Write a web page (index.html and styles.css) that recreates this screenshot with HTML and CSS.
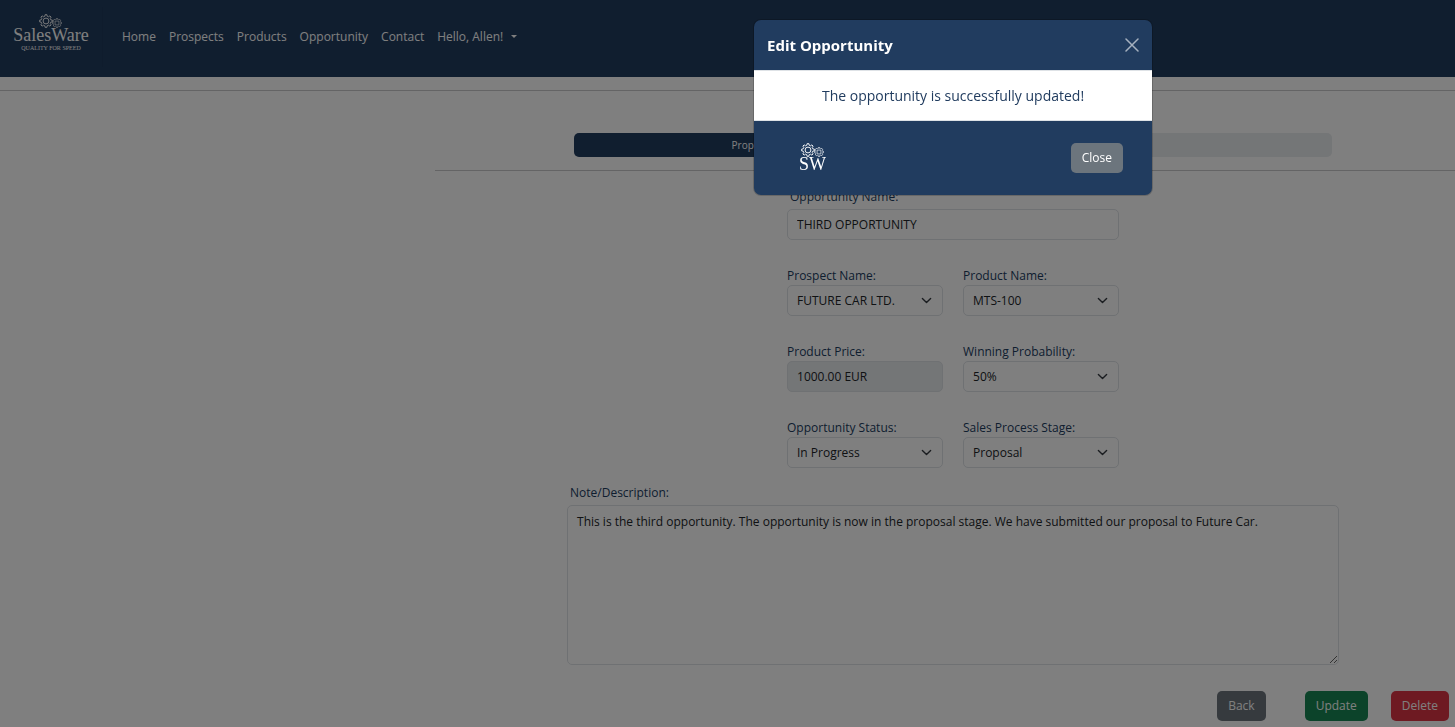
FILE: index.html
```html
<!DOCTYPE html>
<html lang="en">
<head>
  <meta charset="utf-8">
  <meta name="viewport" content="width=device-width, initial-scale=1">
  <title>SalesWare - Edit Opportunity</title>
  <link rel="stylesheet" href="styles.css">
</head>
<body>
  <svg class="defs" aria-hidden="true">
    <symbol id="gear" viewBox="-12 -12 24 24">
      <path d="M8.3-1.9 10.9-1.5V1.5L8.3 1.9 7.2 4.5 8.8 6.6 6.6 8.8 4.5 7.2 1.9 8.3 1.5 10.9H-1.5L-1.9 8.3-4.5 7.2-6.6 8.8-8.8 6.6-7.2 4.5-8.3 1.9-10.9 1.5V-1.5L-8.3-1.9-7.2-4.5-8.8-6.6-6.6-8.8-4.5-7.2-1.9-8.3-1.5-10.9H1.5L1.9-8.3 4.5-7.2 6.6-8.8 8.8-6.6 7.2-4.5Z"/>
      <circle r="5"/>
    </symbol>
  </svg>

  <header class="navbar">
    <a class="brand" href="#">
      <svg class="gears" viewBox="0 0 24 14" aria-hidden="true">
        <use href="#gear" x="0" y="0" width="14" height="14"/>
        <use href="#gear" x="13" y="4" width="10" height="10"/>
      </svg>
      <span class="brand-name">SalesWare</span>
      <span class="brand-tag">QUALITY FOR SPEED</span>
    </a>
    <nav class="nav-links">
      <a href="#">Home</a>
      <a href="#">Prospects</a>
      <a href="#">Products</a>
      <a href="#">Opportunity</a>
      <a href="#">Contact</a>
      <a class="dropdown" href="#">Hello, Allen!</a>
    </nav>
  </header>
  <hr class="rule top-rule">

  <main class="content">
    <div class="progress">
      <div class="progress-bar" role="progressbar" aria-label="Sales stage" aria-valuenow="47" aria-valuemin="0" aria-valuemax="100" style="width: 47%">Proposal</div>
    </div>
    <hr class="rule section-rule">

    <form class="form">
      <div class="fields">
        <div class="field spaced full">
          <label for="name">Opportunity Name:</label>
          <input class="control" id="name" type="text" value="THIRD OPPORTUNITY">
        </div>
        <div class="field">
          <label for="prospect">Prospect Name:</label>
          <select class="control" id="prospect"><option>FUTURE CAR LTD.</option></select>
        </div>
        <div class="field">
          <label for="product">Product Name:</label>
          <select class="control" id="product"><option>MTS-100</option></select>
        </div>
        <div class="field">
          <label for="price">Product Price:</label>
          <input class="control" id="price" type="text" value="1000.00 EUR" readonly>
        </div>
        <div class="field">
          <label for="probability">Winning Probability:</label>
          <select class="control" id="probability"><option>50%</option></select>
        </div>
        <div class="field">
          <label for="status">Opportunity Status:</label>
          <select class="control" id="status"><option>In Progress</option></select>
        </div>
        <div class="field">
          <label for="stage">Sales Process Stage:</label>
          <select class="control" id="stage"><option>Proposal</option></select>
        </div>
      </div>
      <div class="field spaced note">
        <label for="note">Note/Description:</label>
        <textarea class="control" id="note">This is the third opportunity. The opportunity is now in the proposal stage. We have submitted our proposal to Future Car.</textarea>
      </div>
      <div class="actions">
        <button class="btn secondary back" type="button">Back</button>
        <button class="btn success" type="button">Update</button>
        <button class="btn danger" type="button">Delete</button>
      </div>
    </form>
  </main>

  <div class="overlay">
    <section class="modal" role="dialog" aria-modal="true" aria-labelledby="modal-title">
      <header class="modal-header">
        <h1 id="modal-title">Edit Opportunity</h1>
        <button class="close-icon" type="button" aria-label="Dismiss">
          <svg viewBox="0 0 14 14" aria-hidden="true"><path d="M1 1 13 13M13 1 1 13"/></svg>
        </button>
      </header>
      <p class="modal-body">The opportunity is successfully updated!</p>
      <footer class="modal-footer">
        <div class="mark">
          <svg class="gears" viewBox="0 0 24 14" aria-hidden="true">
            <use href="#gear" x="0" y="0" width="14" height="14"/>
            <use href="#gear" x="13" y="4" width="10" height="10"/>
          </svg>
          <span>SW</span>
        </div>
        <button class="btn secondary" type="button">Close</button>
      </footer>
    </section>
  </div>
</body>
</html>
```
FILE: styles.css
```css
:root {
  --navy: #213c5f;
  --border: #dee2e6;
  --sans: "Segoe UI", "Open Sans", "Noto Sans", sans-serif;
  --serif: "Liberation Serif", serif;
}

* {
  box-sizing: border-box;
}

body {
  margin: 0;
  background: #fff;
  color: #212529;
  font: 12px/18px var(--sans);
}

.defs {
  position: absolute;
  width: 0;
  height: 0;
}

.navbar {
  display: flex;
  align-items: center;
  gap: 19px;
  padding: 7px 0 10px;
  background: var(--navy);
}

.brand {
  display: flex;
  flex-direction: column;
  align-items: center;
  width: 103px;
  height: 60px;
  padding-top: 7px;
  border-right: 1px solid #1f395a;
  color: #fff;
  font-family: var(--serif);
  text-decoration: none;
}

.gears {
  width: 24px;
  height: 14px;
  fill: none;
  stroke: currentColor;
  stroke-width: 1.6;
}

.brand-name {
  font-size: 18px;
  line-height: 15px;
}

.brand-tag {
  font-size: 6px;
  line-height: 10px;
}

.nav-links {
  display: flex;
  gap: 13px;
}

.nav-links a {
  color: #fff;
  text-decoration: none;
}

.dropdown::after {
  content: "";
  display: inline-block;
  margin-left: 8px;
  border: 3px solid transparent;
  border-top-color: currentColor;
  border-bottom: 0;
  vertical-align: 3px;
}

.rule {
  height: 1px;
  margin: 0;
  border: 0;
  background: #c8c9ca;
}

.top-rule {
  margin-top: 13px;
}

.content {
  margin-left: 29.9%;
  padding: 42px 0 0 16px;
}

.section-rule {
  margin-left: -16px;
}

.progress {
  max-width: 758px;
  height: 24px;
  margin: 0 auto 13px;
  overflow: hidden;
  border-radius: 5px;
  background: #e9ecef;
}

.progress-bar {
  height: 100%;
  background: var(--navy);
  color: #fff;
  font-size: 10px;
  line-height: 24px;
  text-align: center;
}

.form {
  padding-top: 17px;
}

.fields {
  display: grid;
  grid-template-columns: 1fr 1fr;
  gap: 27px 20px;
  max-width: 332px;
  margin: 0 auto 16px;
}

.field {
  display: flex;
  flex-direction: column;
}

.full {
  grid-column: 1 / -1;
}

.field label {
  color: var(--navy);
}

.spaced {
  gap: 3px;
}

.spaced label {
  padding-left: 3px;
}

.control {
  width: 100%;
  height: 31px;
  padding: 4px 9px;
  border: 1px solid var(--border);
  border-radius: 5px;
  background: #fff;
  color: #212529;
  font: inherit;
}

.control[readonly] {
  background: #e9ecef;
}

select.control {
  appearance: none;
  background: #fff url("data:image/svg+xml,%3Csvg xmlns='http://www.w3.org/2000/svg' viewBox='0 0 16 16'%3E%3Cpath fill='none' stroke='%23343a40' stroke-linecap='round' stroke-linejoin='round' stroke-width='2' d='m2 5 6 6 6-6'/%3E%3C/svg%3E") no-repeat right 10px center / 11px 11px;
}

.note {
  max-width: 772px;
  margin: 0 auto;
}

textarea.control {
  height: 160px;
  padding-top: 7px;
  resize: both;
}

.actions {
  display: flex;
  justify-content: flex-end;
  gap: 23px;
  padding: 26px 6px 6px;
}

.back {
  margin-right: 16px;
}

.btn {
  padding: 6px 11px;
  border: 0;
  border-radius: 5px;
  color: #fff;
  font: inherit;
}

.secondary {
  background: #6c757d;
}

.success {
  background: #198754;
}

.danger {
  background: #dc3545;
}

.overlay {
  position: fixed;
  inset: 0;
  display: flex;
  align-items: flex-start;
  justify-content: center;
  padding: 20px 0 0 31%;
  background: rgba(0, 0, 0, 0.5);
}

.modal {
  width: 398px;
  max-width: 100%;
  overflow: hidden;
  border-radius: 7px;
  background: var(--navy);
  box-shadow: 0 0 0 1px rgba(0, 0, 0, 0.18);
  color: #fff;
}

.modal-header {
  display: flex;
  align-items: center;
  justify-content: space-between;
  height: 50px;
  padding: 0 13px;
}

.modal-header h1 {
  margin: 0;
  font-size: 15px;
  line-height: 22px;
}

.close-icon {
  width: 14px;
  height: 14px;
  padding: 0;
  border: 0;
  background: none;
}

.close-icon svg {
  display: block;
  stroke: #a6b1bf;
  stroke-width: 1.5;
  stroke-linecap: round;
}

.modal-body {
  margin: 0;
  padding: 14px 13px 13px;
  border: 1px solid var(--border);
  border-width: 1px 0;
  background: #fff;
  color: var(--navy);
  font-size: 14px;
  line-height: 22px;
  text-align: center;
}

.modal-footer {
  display: flex;
  align-items: center;
  justify-content: space-between;
  height: 74px;
  padding: 0 29px 0 45px;
}

.mark {
  display: flex;
  flex-direction: column;
  align-items: center;
  padding-bottom: 2px;
  font: 18px/14px var(--serif);
}
```
